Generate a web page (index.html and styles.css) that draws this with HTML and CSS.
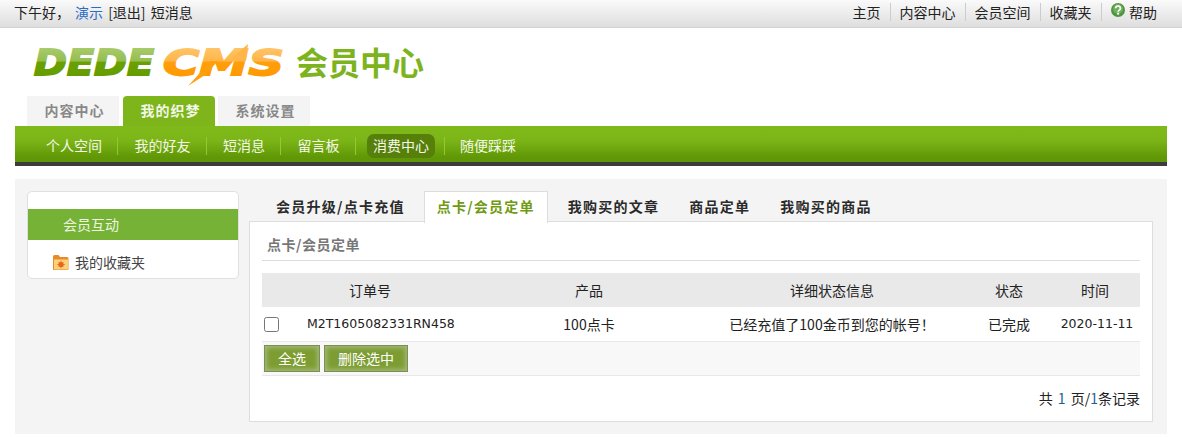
FILE: index.html
```html
<!DOCTYPE html>
<html lang="zh">
<head>
<meta charset="utf-8">
<title>会员中心</title>
<link rel="stylesheet" href="styles.css">
</head>
<body>
<div class="topbar">
  <div class="greet">下午好，<a class="blue">演示</a> [退出] 短消息</div>
  <ul class="toplinks">
    <li>主页</li>
    <li>内容中心</li>
    <li>会员空间</li>
    <li>收藏夹</li>
    <li class="help"><svg class="help-ico" viewBox="0 0 14 14" width="14" height="14"><circle cx="7" cy="7" r="7" fill="#4f9440"/><circle cx="7" cy="6" r="5" fill="#6fb05c"/><path d="M4.600 5.200a2.400 2.200 0 1 1 3.700 1.900c-.9.600-1.200.9-1.200 1.700" fill="none" stroke="#fff" stroke-width="1.700"/><rect x="6.100" y="9.700" width="2" height="1.900" fill="#fff"/></svg>帮助</li>
  </ul>
</div>
<div class="wrap">
  <div class="logo">
    <svg class="logo-mark" width="263" height="50" viewBox="0 0 263 50">
      <defs>
        <linearGradient id="gGreen" gradientUnits="userSpaceOnUse" x1="0" y1="11" x2="0" y2="39">
          <stop offset="0" stop-color="#a8cb6a"/><stop offset=".47" stop-color="#94bd50"/><stop offset=".5" stop-color="#6aa100"/><stop offset="1" stop-color="#659c00"/>
        </linearGradient>
        <linearGradient id="gOrange" gradientUnits="userSpaceOnUse" x1="0" y1="11" x2="0" y2="39">
          <stop offset="0" stop-color="#ffc469"/><stop offset=".47" stop-color="#ffb548"/><stop offset=".5" stop-color="#ff9f0c"/><stop offset="1" stop-color="#ff9900"/>
        </linearGradient>
      </defs>
      <text class="mark-text" x="1" y="38" textLength="120" lengthAdjust="spacingAndGlyphs" fill="url(#gGreen)" stroke="url(#gGreen)">DEDE</text>
      <text class="mark-text" x="130" y="38" textLength="121" lengthAdjust="spacingAndGlyphs" fill="url(#gOrange)" stroke="url(#gOrange)">CMS</text>
      <polygon points="155,49 178,24 185,24 172,38" fill="#ff9f0c"/>
      <polygon points="198,22 215,7 213,24" fill="#ffb548"/>
    </svg>
    <span class="logo-cn">会员中心</span>
  </div>
  <div class="maintabs">
    <a class="mt">内容中心</a>
    <a class="mt on">我的织梦</a>
    <a class="mt">系统设置</a>
  </div>
  <ul class="subnav">
    <li>个人空间</li>
    <li>我的好友</li>
    <li>短消息</li>
    <li>留言板</li>
    <li class="on">消费中心</li>
    <li>随便踩踩</li>
  </ul>
  <div class="content">
    <aside class="side">
      <div class="side-title">会员互动</div>
      <div class="side-item">
        <svg viewBox="0 0 17 17" width="17" height="17"><path d="M1 2.500q0-1.500 1.500-1.500h4l1.500 2h7q1.500 0 1.500 1.500v10.500q0 1-1 1h-14q-.5 0-.5-1z" fill="#e8892a"/><rect x="2" y="5.500" width="14" height="10" fill="#fbd27b"/><circle cx="9" cy="10.500" r="2.600" fill="#e8641b"/><path d="M9 6.700v7.600M5.200 10.500h7.600M6.400 7.900l5.200 5.200M11.600 7.900l-5.200 5.200" stroke="#e8641b" stroke-width=".8"/></svg>
        <span>我的收藏夹</span>
      </div>
    </aside>
    <main class="main">
      <div class="tabs">
        <a class="tab">会员升级/点卡充值</a>
        <a class="tab on">点卡/会员定单</a>
        <a class="tab">我购买的文章</a>
        <a class="tab">商品定单</a>
        <a class="tab">我购买的商品</a>
      </div>
      <div class="panel">
        <h3 class="panel-title">点卡/会员定单</h3>
        <table class="orders">
          <colgroup><col class="c1"><col class="c2"><col class="c3"><col class="c4"><col class="c5"></colgroup>
          <thead>
            <tr><th>订单号</th><th>产品</th><th>详细状态信息</th><th>状态</th><th>时间</th></tr>
          </thead>
          <tbody>
            <tr class="row">
              <td class="order"><input type="checkbox" class="chk"><span>M2T1605082331RN458</span></td>
              <td>100点卡</td>
              <td>已经充值了100金币到您的帐号！</td>
              <td>已完成</td>
              <td class="date">2020-11-11</td>
            </tr>
            <tr class="actions">
              <td colspan="5"><button class="btn">全选</button><button class="btn">删除选中</button></td>
            </tr>
          </tbody>
        </table>
        <div class="pager">共 <span class="num">1</span> 页/<span class="num">1</span>条记录</div>
      </div>
    </main>
  </div>
</div>
</body>
</html>
```
FILE: styles.css
```css
* { box-sizing: border-box; }
html, body { margin: 0; padding: 0; }
body {
  background: #fff;
  color: #222;
  font: 14px/20px "Noto Sans CJK SC", "Liberation Sans", sans-serif;
  overflow: hidden;
}
ul { list-style: none; margin: 0; padding: 0; }

.topbar {
  height: 28px;
  display: flex;
  justify-content: space-between;
  align-items: center;
  padding: 0 25px 4px 14px;
  background: linear-gradient(#fafafa, #dedede);
  border-bottom: 1px solid #d2d2d2;
}
.greet { word-spacing: 2px; }
.blue { color: #2b6cc4; margin-left: 5px; }
.toplinks { display: flex; align-items: center; }
.toplinks li { padding: 0 9px; border-right: 1px solid #ccc; height: 18px; line-height: 18px; display: flex; align-items: center; }
.toplinks li.help { border-right: 0; padding: 0 0 0 9.500px; }
.help-ico { margin-right: 4px; margin-top: -4px; }

.wrap { padding: 0 15px; }

.logo {
  height: 68px;
  display: flex;
  align-items: center;
  padding: 0 0 0 18px;
  white-space: nowrap;
}
.logo-mark { flex: none; overflow: visible; }
.mark-text {
  font-family: "DejaVu Sans", sans-serif;
  font-size: 36px;
  font-weight: 700;
  font-style: italic;
  stroke-width: 1.800px;
}
.logo-cn {
  font-size: 32px;
  line-height: 42px;
  font-weight: 700;
  color: #7db41e;
  margin-top: -3px;
}

.maintabs { display: flex; height: 30px; padding-left: 12px; gap: 4px; }
.mt {
  width: 92px;
  height: 30px;
  line-height: 29px;
  padding-left: 3px;
  text-align: center;
  background: #f4f4f4;
  color: #888;
  font-weight: 700;
  letter-spacing: 1px;
}
.mt.on { background: #7db51a; color: #f2f7e6; border-radius: 4px 4px 0 0; }
.mt:last-child { margin-left: -1px; }

.subnav {
  height: 40px;
  display: flex;
  align-items: flex-start;
  padding: 8px 0 0 15px;
  background: linear-gradient(#80b91a 0, #7cb517 40%, #5f9706 88%, #5f9706 90%);
  border-bottom: 4px solid #3c3c3c;
  color: #f4f8e8;
}
.subnav li {
  position: relative;
  height: 24px;
  line-height: 22px;
  padding: 0 6px 0 16px;
  margin-right: 10.500px;
}
.subnav li::after {
  content: "";
  position: absolute;
  right: -10px;
  top: 3px;
  width: 1px;
  height: 18px;
  background: #94c830;
}
.subnav li:last-child::after { display: none; }
.subnav li.on {
  padding: 0 6px;
  margin: 0 9px 0 11px;
  background: #56800a;
  border-radius: 7px;
}

.content {
  margin-top: 13px;
  height: 255px;
  background: #f4f4f4;
  display: flex;
  align-items: flex-start;
  padding: 12px 14px 0 12px;
  gap: 10px;
}
.side {
  width: 212px;
  height: 88px;
  background: #fff;
  border: 1px solid #e0e0e0;
  border-radius: 5px;
  padding-top: 17px;
  flex: none;
}
.side-title {
  height: 31px;
  line-height: 30px;
  background: #76b236;
  color: #eef6e2;
  padding-left: 35px;
}
.side-item {
  display: flex;
  align-items: center;
  gap: 6px;
  padding: 6px 0 0 24px;
  height: 38px;
  color: #444;
}

.main { flex: 1; min-width: 0; }
.tabs { display: flex; height: 31px; padding-left: 14px; margin-bottom: -1px; position: relative; }
.tab {
  height: 31px;
  line-height: 28px;
  padding: 0 12px;
  margin-right: 4px;
  font-weight: 700;
  letter-spacing: 1.250px;
  color: #2a2a2a;
  border: 1px solid transparent;
  border-bottom: 0;
  white-space: nowrap;
}
.tab:first-child { margin-right: 6px; }
.tab.on {
  background: #fff;
  color: #6f9a12;
  border-color: #ddd;
  height: 32px;
  margin-right: 7px;
}
.panel {
  height: 201px;
  background: #fff;
  border: 1px solid #ddd;
  padding: 0 12px;
}
.panel-title {
  margin: 0;
  height: 39px;
  line-height: 45px;
  padding-left: 5px;
  font-size: 14px;
  font-weight: 700;
  letter-spacing: .5px;
  color: #777;
  border-bottom: 1px solid #ddd;
}
.orders {
  margin-top: 12px;
  width: 878px;
  border-collapse: collapse;
  table-layout: fixed;
}
.c1 { width: 216px; }
.c2 { width: 222px; }
.c3 { width: 264px; }
.c4 { width: 90px; }
.c5 { width: 86px; }
.orders th {
  height: 34px;
  background: #e9e9e9;
  font-weight: 400;
  text-align: center;
  padding: 0;
  color: #222;
}
.orders th:last-child { padding-right: 4px; }
.orders td { text-align: center; padding: 0; height: 34px; border-bottom: 1px solid #e8e8e8; }
.orders .date { font-family: "DejaVu Sans", sans-serif; font-size: 12.500px; }
.row td.order { text-align: left; }
.order { font-family: "DejaVu Sans", sans-serif; }
.order span { font-size: 12.500px; vertical-align: middle; }
.chk { width: 15px; height: 15px; margin: 0 28px 0 2px; vertical-align: middle; }
.orders .actions td { text-align: left; background: #f8f8f8; height: 34px; padding: 0 0 0 2px; }
.btn {
  height: 27px;
  padding: 0 13px;
  margin-right: 4px;
  font: 14px/20px "Noto Sans CJK SC", sans-serif;
  color: #fff;
  background: #7d9d32;
  border: 1px solid #7c8f55;
  box-shadow: inset 0 0 4px 2px #a2b878;
  vertical-align: middle;
}
.pager { text-align: right; margin-top: 12px; word-spacing: 2px; }
.num { color: #1a5f96; }
```
